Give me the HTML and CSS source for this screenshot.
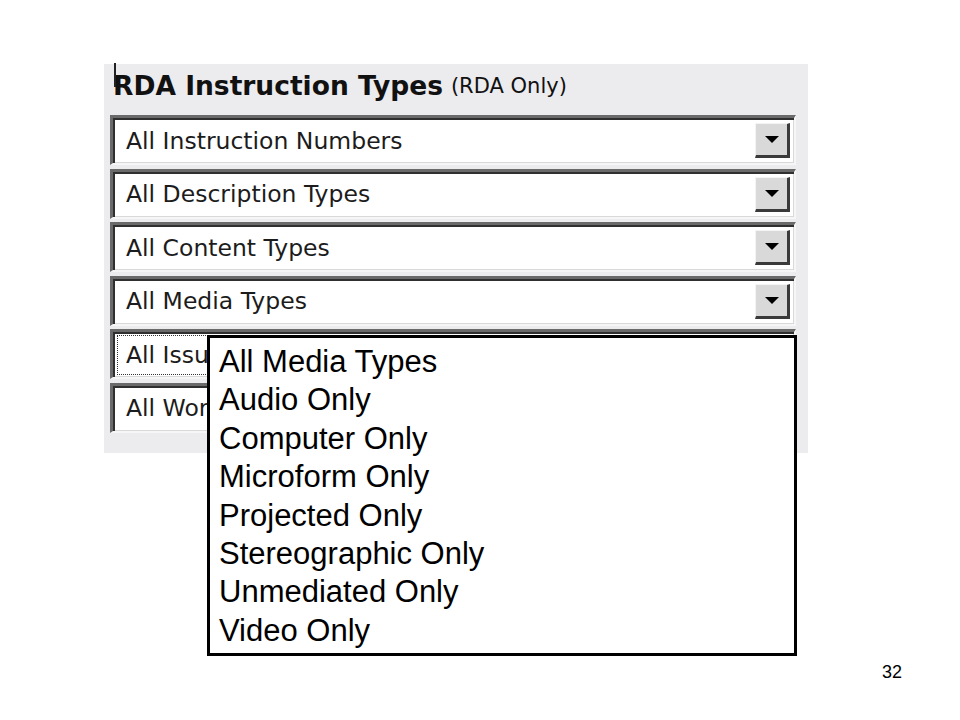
FILE: index.html
```html
<!DOCTYPE html>
<html lang="en">

<head>
    <meta charset="UTF-8">
    <meta name="viewport" content="width=device-width, initial-scale=1.0">
    <title>RDA Instruction Types</title>
    <link rel="stylesheet" href="styles.css">
</head>

<body>

    <div class="slide">
        <!-- Screenshot of the filter panel -->
        <div class="panel">
            <span class="text-cursor"></span>
            <div class="panel-title">RDA Instruction Types <span class="panel-note">(RDA Only)</span></div>

            <div class="select-list">
                <div class="select">
                    <span class="select-value">All Instruction Numbers</span>
                    <span class="select-btn"><span class="arrow"></span></span>
                </div>
                <div class="select">
                    <span class="select-value">All Description Types</span>
                    <span class="select-btn"><span class="arrow"></span></span>
                </div>
                <div class="select">
                    <span class="select-value">All Content Types</span>
                    <span class="select-btn"><span class="arrow"></span></span>
                </div>
                <div class="select">
                    <span class="select-value">All Media Types</span>
                    <span class="select-btn"><span class="arrow"></span></span>
                </div>
                <div class="select focused">
                    <span class="select-value">All Issuance Types</span>
                    <span class="select-btn"><span class="arrow"></span></span>
                </div>
                <div class="select">
                    <span class="select-value">All Work Types</span>
                    <span class="select-btn"><span class="arrow"></span></span>
                </div>
            </div>
        </div>

        <!-- Options of the media types list -->
        <ul class="dropdown">
            <li>All Media Types</li>
            <li>Audio Only</li>
            <li>Computer Only</li>
            <li>Microform Only</li>
            <li>Projected Only</li>
            <li>Stereographic Only</li>
            <li>Unmediated Only</li>
            <li>Video Only</li>
        </ul>

        <div class="page-num">32</div>
    </div>

</body>

</html>
```

FILE: styles.css
```css
body {
    margin: 0;
    background-color: #fff;
}

.slide {
    position: relative;
    width: 960px;
    height: 720px;
    display: flex;
    flex-direction: column;
    font-family: "Liberation Sans", Arial, sans-serif;
}

.panel {
    position: relative;
    margin: 64px 0 0 104px;
    width: 686px;
    height: 389px;
    padding: 0 12px 0 6px;
    background-color: #ecebee;
    font-family: "DejaVu Sans", sans-serif;
}

.text-cursor {
    position: absolute;
    left: 10px;
    top: -1px;
    width: 2px;
    height: 24px;
    background-color: #222;
}

.panel-title {
    height: 43px;
    padding: 0 0 8px 3px;
    display: flex;
    align-items: center;
    gap: 8px;
    font-size: 26.5px;
    font-weight: bold;
    color: #111;
}

.panel-note {
    font-size: 21px;
    font-weight: normal;
}

.select-list {
    display: flex;
    flex-direction: column;
    gap: 3.5px;
}

.select {
    height: 45px;
    display: flex;
    align-items: center;
    border-style: solid;
    border-width: 3px 2px 2px 3px;
    border-color: #6a6a6a #f6f6f6 #f6f6f6 #6a6a6a;
    box-shadow: inset 2px 2px 0 #2f2f2f, inset -1px -1px 0 #d9d9d9;
    background-color: #fff;
}

.select-value {
    flex: 1;
    margin-left: 13px;
    font-size: 23.5px;
    color: #1c1c1c;
}

.focused .select-value {
    margin-left: 5px;
    padding: 5px 0 5px 8px;
    outline: 1px dotted #333;
}

.select-btn {
    width: 31px;
    height: 31px;
    margin: 0 4px 0 8px;
    display: flex;
    align-items: center;
    justify-content: center;
    background-color: #d9d9d9;
    border-style: solid;
    border-width: 1px 3px 3px 1px;
    border-color: #f4f4f4 #3a3a3a #3a3a3a #f4f4f4;
}

.arrow {
    width: 0;
    height: 0;
    border-left: 7px solid transparent;
    border-right: 7px solid transparent;
    border-top: 7px solid #000;
}

.dropdown {
    position: absolute;
    left: 207px;
    top: 335px;
    width: 566px;
    height: 307px;
    margin: 0;
    padding: 5px 9px 3px 9px;
    list-style: none;
    background-color: #fff;
    border: 3px solid #000;
    font-size: 31px;
    line-height: 38.4px;
    color: #000;
}

.page-num {
    margin-top: auto;
    padding: 0 58px 37px 0;
    text-align: right;
    font-size: 18px;
    line-height: 22px;
}
```
